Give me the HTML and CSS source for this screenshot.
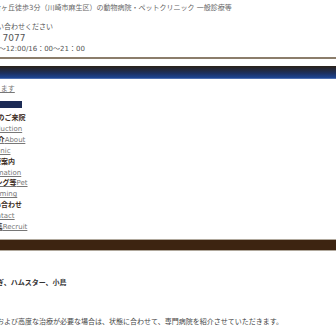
FILE: index.html
```html
<!DOCTYPE html>
<html>
<head lang="ja">
  <meta charset="UTF-8">
  <title>新百合ヶ丘の動物病院</title>
  <link rel="stylesheet" href="styles.css">
</head>
<body>
  <div class="page">
    <div class="header">
      <p class="lead">新百合ヶ丘徒歩3分（川崎市麻生区）の動物病院・ペットクリニック 一般診療等</p>
      <div class="info">
        <p>お問い合わせください</p>
        <p>TEL：<span class="tel">7077</span></p>
        <p>9:00〜12:00/16：00〜21：00</p>
      </div>
    </div>
    <div class="topbar"></div>
    <p class="notice"><a href="#">ております</a></p>
    <ul class="nav">
      <li class="home"><a href="#">HOME</a></li>
      <li><b>初めてのご来院</b><br><a href="#">Introduction</a></li>
      <li><a href="#"><b>病院紹介</b>About<br>Clinic</a></li>
      <li><b>診療案内</b><br><a href="#">Information</a></li>
      <li><a href="#"><b>トリミング等</b>Pet<br>Trimming</a></li>
      <li><b>お問い合わせ</b><br><a href="#">Contact</a></li>
      <li><a href="#"><b>求人募集</b>Recruit</a></li>
    </ul>
    <div class="bottombar"></div>
    <div class="content">
      <p class="animals">うさぎ、ハムスター、小鳥</p>
      <p class="text">検査および高度な治療が必要な場合は、状態に合わせて、専門病院を紹介させていただきます。</p>
    </div>
  </div>
</body>
</html>
```

FILE: styles.css
```css
* {
  margin: 0;
  padding: 0;
}
html, body {
  overflow: hidden;
}
body {
  font-family: "DejaVu Sans", "Noto Sans CJK JP", sans-serif;
  font-size: 7px;
  line-height: 11px;
  color: #555;
  background: #fff;
}
ul {
  list-style: none;
}
a {
  color: #777;
}
b {
  color: #3a2a1a;
}
.page {
  margin-left: -20px;
  width: 400px;
}
.header {
  padding-top: 3px;
}
.lead {
  color: #666;
}
.info {
  margin-top: 8px;
  padding: 0 0 2px 3px;
  line-height: 10.5px;
  border-bottom: 2px solid #8b7d6b;
}
.info .tel {
  font-size: 9px;
  line-height: 10px;
}
.topbar {
  margin-top: 7px;
  height: 12px;
  background: linear-gradient(#2a2118, #1c3060 60%, #1d4594);
  border-bottom: 1px solid #4f6fb0;
}
.notice {
  margin-top: 5.5px;
}
.nav {
  width: 80px;
  margin-left: -19px;
  text-align: center;
  white-space: nowrap;
  line-height: 10.9px;
}
.nav .home {
  width: 42px;
  height: 7px;
  margin: 5.5px auto;
  background: #1c2b55;
  overflow: hidden;
}
.nav .home a {
  display: block;
  line-height: 7px;
  color: #1c2b55;
  text-decoration: none;
}
.bottombar {
  margin-top: 6.5px;
  height: 10px;
  background: #3d2411;
  border-top: 1px solid #b0a89c;
  border-bottom: 1px solid #b0a89c;
}
.content {
  padding: 26.5px 0 0 3px;
}
.animals {
  font-weight: bold;
  color: #333;
}
.text {
  margin-top: 28px;
  color: #444;
}
```
